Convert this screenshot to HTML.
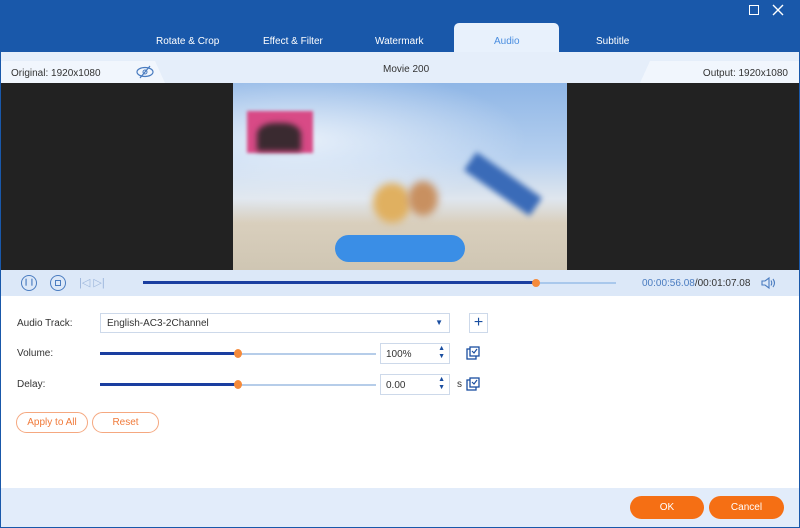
<!DOCTYPE html><html><head><style>
*{margin:0;padding:0;box-sizing:border-box}
body{width:800px;height:528px;overflow:hidden;font-family:"Liberation Sans",sans-serif;font-size:10px;color:#333;background:#fff;position:relative}
.a{position:absolute}
.tab{position:absolute;top:36px;color:#fff;font-size:10px}
</style></head><body>
<div class="a" style="left:0;top:0;width:800px;height:52px;background:#1958aa"></div>
<div class="a" style="left:749px;top:5px;width:10px;height:10px;border:1.5px solid #fff"></div>
<svg class="a" style="left:772px;top:4px" width="12" height="12"><path d="M1 1L11 11M11 1L1 11" stroke="#fff" stroke-width="1.4"/></svg>
<div class="a" style="left:454px;top:23px;width:105px;height:30px;background:#e8f1fc;border-radius:5px 5px 0 0"></div>
<div class="tab" style="left:156px">Rotate &amp; Crop</div>
<div class="tab" style="left:263px">Effect &amp; Filter</div>
<div class="tab" style="left:375px">Watermark</div>
<div class="tab" style="left:494px;color:#4a8ee0">Audio</div>
<div class="tab" style="left:596px">Subtitle</div>
<div class="a" style="left:0;top:52px;width:800px;height:31px;background:#e5eefa"></div>
<div class="a" style="left:0;top:61px;width:165px;height:22px;background:#f1f6fd;clip-path:polygon(0 0,155px 0,165px 100%,0 100%)"></div>
<div class="a" style="left:640px;top:61px;width:160px;height:22px;background:#f1f6fd;clip-path:polygon(10px 0,100% 0,100% 100%,0 100%)"></div>
<div class="a" style="left:11px;top:68px;color:#333">Original: 1920x1080</div>
<svg class="a" style="left:136px;top:65px" width="18" height="14"><ellipse cx="9" cy="7" rx="8" ry="4.5" fill="none" stroke="#4a7cc0" stroke-width="1.2"/><circle cx="9" cy="7" r="2" fill="none" stroke="#4a7cc0"/><line x1="4" y1="13" x2="14" y2="1" stroke="#4a7cc0" stroke-width="1.2"/></svg>
<div class="a" style="left:383px;top:64px">Movie 200</div>
<div class="a" style="right:12px;top:68px">Output: 1920x1080</div>
<div class="a" style="left:0;top:83px;width:800px;height:187px;background:#222"></div>
<div class="a" style="left:233px;top:83px;width:334px;height:187px;overflow:hidden;background:linear-gradient(180deg,#8fb6e6 0%,#b6d0ef 40%,#dfe6ee 62%,#d9cfbd 75%,#cfc6b3 100%)">
<div class="a" style="left:0;top:0;width:334px;height:140px;background:radial-gradient(ellipse at 20% 40%,rgba(255,255,255,.7),rgba(255,255,255,0) 60%)"></div>
<div class="a" style="left:14px;top:28px;width:66px;height:42px;background:#d84a86;filter:blur(1.5px)"></div>
<div class="a" style="left:24px;top:40px;width:44px;height:28px;background:#3a2a30;border-radius:40% 40% 0 0;filter:blur(3px)"></div>
<div class="a" style="left:140px;top:100px;width:38px;height:40px;background:#e0b060;border-radius:50%;filter:blur(4px)"></div>
<div class="a" style="left:175px;top:98px;width:30px;height:35px;background:#c89060;border-radius:50%;filter:blur(4px)"></div>
<div class="a" style="left:230px;top:90px;width:80px;height:22px;background:#3a6bb8;transform:rotate(35deg);filter:blur(3px)"></div>
<div class="a" style="left:102px;top:152px;width:130px;height:27px;background:#3a8ee6;border-radius:14px"></div>
</div>
<div class="a" style="left:0;top:270px;width:800px;height:26px;background:#dce8f8"></div>
<div class="a" style="left:21px;top:275px;width:16px;height:16px;border:1.3px solid #4a7cc0;border-radius:50%;color:#4a7cc0;font-size:7px;text-align:center;line-height:13px">❙❙</div>
<div class="a" style="left:50px;top:275px;width:16px;height:16px;border:1.3px solid #4a7cc0;border-radius:50%"><div class="a" style="left:4px;top:4px;width:6px;height:6px;border:1px solid #4a7cc0"></div></div>
<div class="a" style="left:79px;top:276px;color:#9bb5db;font-size:11px">|◁ ▷|</div>
<div class="a" style="left:143px;top:282px;width:473px;height:2px;background:#a9c8ec"></div>
<div class="a" style="left:143px;top:281px;width:393px;height:3px;background:#1a3ea0"></div>
<div class="a" style="left:532px;top:279px;width:8px;height:8px;background:#f58a3a;border-radius:50%"></div>
<div class="a" style="left:642px;top:278px;color:#4a7cc0">00:00:56.08<span style="color:#333">/00:01:07.08</span></div>
<svg class="a" style="left:761px;top:276px" width="16" height="14"><path d="M1 5h3l4-3v10l-4-3H1z" fill="none" stroke="#4a7cc0" stroke-width="1.1"/><path d="M10 4.5q1.5 2.5 0 5M12 3q3 4 0 8" fill="none" stroke="#4a7cc0" stroke-width="1.1"/></svg>
<div class="a" style="left:17px;top:318px">Audio Track:</div>
<div class="a" style="left:100px;top:313px;width:350px;height:20px;border:1px solid #cdd9ea;background:#fff;padding:4px 6px">English-AC3-2Channel<span style="position:absolute;right:6px;top:4px;color:#1a4ea0;font-size:8px">▼</span></div>
<div class="a" style="left:469px;top:313px;width:19px;height:20px;border:1px solid #cdd9ea;color:#1a4ea0;font-size:16px;text-align:center;line-height:17px">+</div>
<div class="a" style="left:17px;top:348px">Volume:</div>
<div class="a" style="left:17px;top:379px">Delay:</div>
<div class="a" style="left:100px;top:353px;width:276px;height:2px;background:#b6cde9"></div>
<div class="a" style="left:100px;top:352px;width:138px;height:3px;background:#1a3ea0"></div>
<div class="a" style="left:234px;top:349px;width:8px;height:9px;background:#f58a3a;border-radius:50%"></div>
<div class="a" style="left:100px;top:384px;width:276px;height:2px;background:#b6cde9"></div>
<div class="a" style="left:100px;top:383px;width:138px;height:3px;background:#1a3ea0"></div>
<div class="a" style="left:234px;top:380px;width:8px;height:9px;background:#f58a3a;border-radius:50%"></div>
<div class="a" style="left:380px;top:343px;width:70px;height:21px;border:1px solid #cdd9ea;padding:5px 5px">100%<span style="position:absolute;right:4px;top:1px;color:#1a4ea0;font-size:7px;line-height:8px">▲<br>▼</span></div>
<div class="a" style="left:380px;top:374px;width:70px;height:21px;border:1px solid #cdd9ea;padding:5px 5px">0.00<span style="position:absolute;right:4px;top:1px;color:#1a4ea0;font-size:7px;line-height:8px">▲<br>▼</span></div>
<div class="a" style="left:457px;top:379px">s</div>
<svg class="a" style="left:466px;top:346px" width="14" height="14"><rect x="1" y="3" width="9" height="10" fill="none" stroke="#1a4ea0" stroke-width="1.3"/><rect x="4" y="1" width="9" height="9" fill="#fff" stroke="#1a4ea0" stroke-width="1.3"/><path d="M6 5l2 2 3-4" stroke="#1a4ea0" fill="none" stroke-width="1.2"/></svg>
<svg class="a" style="left:466px;top:377px" width="14" height="14"><rect x="1" y="3" width="9" height="10" fill="none" stroke="#1a4ea0" stroke-width="1.3"/><rect x="4" y="1" width="9" height="9" fill="#fff" stroke="#1a4ea0" stroke-width="1.3"/><path d="M6 5l2 2 3-4" stroke="#1a4ea0" fill="none" stroke-width="1.2"/></svg>
<div class="a" style="left:16px;top:412px;width:72px;height:21px;border:1px solid #f5a880;border-radius:11px;color:#f07a3a;text-align:center;line-height:20px">Apply to All</div>
<div class="a" style="left:92px;top:412px;width:67px;height:21px;border:1px solid #f5a880;border-radius:11px;color:#f07a3a;text-align:center;line-height:20px">Reset</div>
<div class="a" style="left:0;top:488px;width:800px;height:40px;background:#e2ecfa"></div>
<div class="a" style="left:630px;top:496px;width:74px;height:23px;background:#f56f14;border-radius:12px;color:#fff;text-align:center;line-height:23px">OK</div>
<div class="a" style="left:709px;top:496px;width:75px;height:23px;background:#f56f14;border-radius:12px;color:#fff;text-align:center;line-height:23px">Cancel</div>
<div class="a" style="left:0;top:0;width:800px;height:528px;border:1px solid #1958aa;border-top:none"></div>
</body></html>
